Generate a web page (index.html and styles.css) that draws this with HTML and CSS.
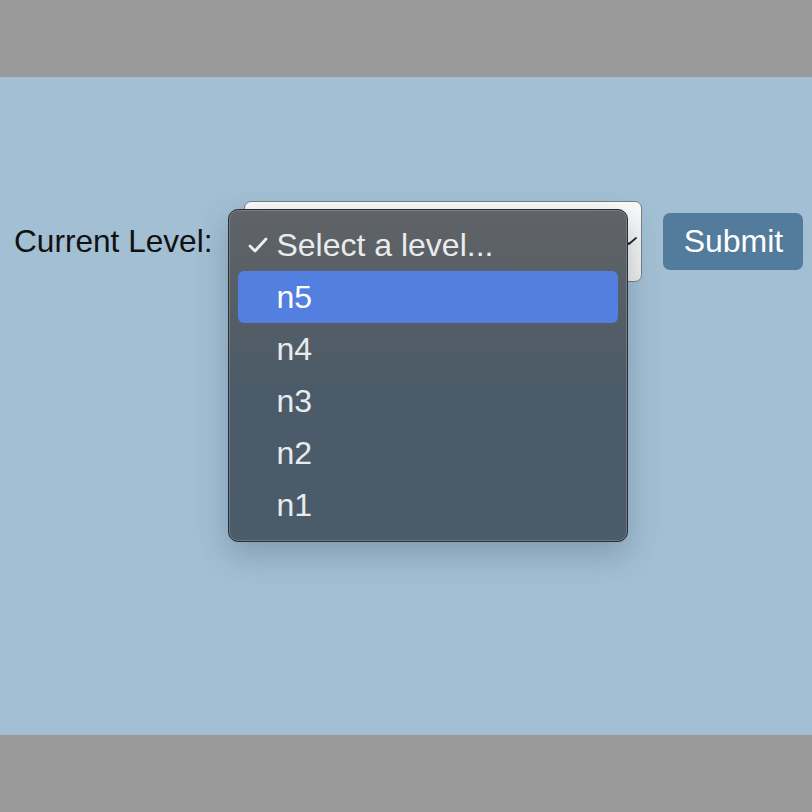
FILE: index.html
```html
<!DOCTYPE html>
<html lang="en">
<head>
<meta charset="utf-8">
<title>Level</title>
<link rel="stylesheet" href="styles.css">
</head>
<body>
<div class="band"></div>
<main class="stage">
  <form class="level-form">
    <label class="level-label">Current Level:</label>
    <div class="select-wrap">
      <div class="select-box">
        <svg class="chevron" width="16" height="10" viewBox="0 0 16 10"><polyline points="1,2 8,8 15,2" fill="none" stroke="#222" stroke-width="1.8" stroke-linecap="round" stroke-linejoin="round"/></svg>
      </div>
      <ul class="menu">
        <li class="item">
          <svg class="check" width="20" height="16" viewBox="0 0 20 16"><polyline points="2,9 7,14 18,2" fill="none" stroke="#eef0f2" stroke-width="2.8" stroke-linecap="round" stroke-linejoin="round"/></svg>
          <span>Select a level...</span>
        </li>
        <li class="item active"><span>n5</span></li>
        <li class="item"><span>n4</span></li>
        <li class="item"><span>n3</span></li>
        <li class="item"><span>n2</span></li>
        <li class="item"><span>n1</span></li>
      </ul>
    </div>
    <button type="button" class="submit">Submit</button>
  </form>
</main>
<div class="band"></div>
</body>
</html>
```

FILE: styles.css
```css
html, body {
  margin: 0;
  padding: 0;
}
body {
  background: #9a9a9a;
  font-family: "Liberation Sans", Arial, sans-serif;
}
.band {
  height: 77px;
  background: #9a9a9a;
}
.stage {
  height: 658px;
  background: #a3bfd4;
  padding-top: 124px;
  box-sizing: border-box;
}
.level-form {
  display: flex;
  align-items: center;
  padding-left: 14px;
  margin: 0;
}
.level-label {
  font-size: 31.6px;
  color: #111;
  margin-right: 32px;
  line-height: 1;
}
.select-wrap {
  position: relative;
  width: 398px;
  height: 81px;
}
.select-box {
  width: 100%;
  height: 100%;
  box-sizing: border-box;
  border: 1px solid #7d7d7d;
  border-radius: 7px;
  background: linear-gradient(#fbfbfb, #ededed);
  position: relative;
}
.chevron {
  position: absolute;
  left: 376px;
  top: 34px;
}
.menu {
  position: absolute;
  left: -16px;
  top: 8px;
  width: 400px;
  height: 333px;
  box-sizing: border-box;
  margin: 0;
  padding: 9px 9px;
  list-style: none;
  border: 1px solid #2a2d30;
  border-radius: 10px;
  background: linear-gradient(#606367 0%, #555e66 30%, #4b5b69 55%, #4a5b6a 100%);
  box-shadow: inset 0 0 0 1px rgba(150, 160, 170, 0.45), 0 12px 32px rgba(40, 60, 80, 0.28);
}
.item {
  position: relative;
  height: 52px;
  display: flex;
  align-items: center;
  padding-left: 38px;
  font-size: 32px;
  color: #e9ebed;
  border-radius: 6px;
}
.item span {
  line-height: 1;
}
.item.active {
  background: #537fe1;
  color: #ffffff;
}
.check {
  position: absolute;
  left: 10px;
  top: 18px;
}
.submit {
  margin-left: 21px;
  width: 140px;
  height: 57px;
  border: none;
  border-radius: 7px;
  background: #527b9c;
  color: #ffffff;
  font-family: "Liberation Sans", Arial, sans-serif;
  font-size: 32px;
  padding: 0;
}
```
